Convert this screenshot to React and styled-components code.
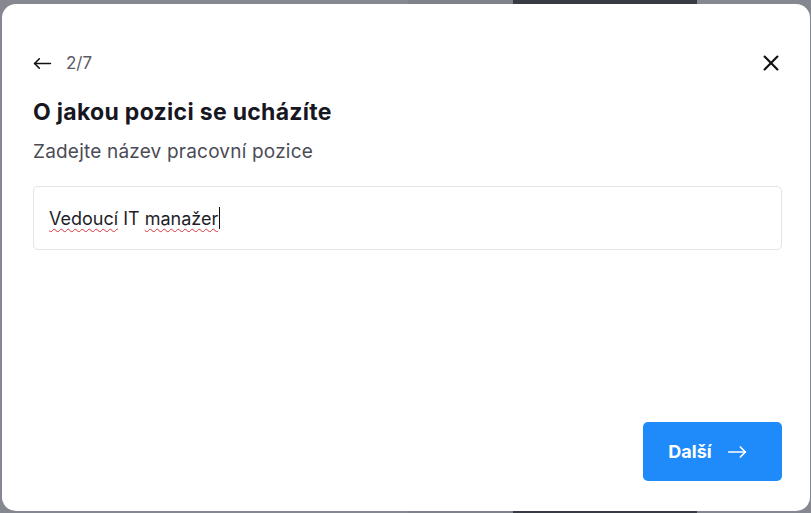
import React from "react"
import styled, { createGlobalStyle } from "styled-components"

const Global = createGlobalStyle`
  html, body {
    margin: 0;
    padding: 0;
  }
  body {
    font-family: "Inter", "Noto Sans", sans-serif;
  }
`

const Backdrop = styled.div`
  width: 811px;
  height: 513px;
  box-sizing: border-box;
  padding: 4px 1px 2px 2px;
  display: flex;
  background: linear-gradient(
    to right,
    #868891 0px,
    #868891 408px,
    #7f828b 408px,
    #7f828b 513px,
    #383b43 513px,
    #383b43 697px,
    #868891 697px
  );
`

const Modal = styled.div`
  flex: 1;
  background: #fff;
  border-radius: 14px;
  padding: 48px 28px 30px 31px;
  display: flex;
  flex-direction: column;
`

const TopRow = styled.div`
  display: flex;
  align-items: center;
  justify-content: space-between;
  height: 22px;
`

const Step = styled.div`
  display: flex;
  align-items: center;
  gap: 14px;
  color: #5b5b66;
  font-size: 17px;
`

const IconButton = styled.button`
  border: none;
  background: none;
  padding: 0;
  display: flex;
  cursor: pointer;
  color: #111;
`

const Title = styled.h2`
  margin: 25px 0 0;
  font-size: 23px;
  line-height: 26px;
  letter-spacing: 0.3px;
  font-weight: 700;
  color: #171722;
`

const Hint = styled.p`
  margin: 16px 0 0;
  font-size: 19px;
  line-height: 22px;
  letter-spacing: 0.2px;
  color: #4b4b55;
`

const Field = styled.div`
  margin-top: 23px;
  height: 64px;
  box-sizing: border-box;
  border: 1px solid #e4e4e7;
  border-radius: 5px;
  padding: 0 15px;
  display: flex;
  align-items: center;
  font-size: 18px;
  color: #1e1e28;
`

const Typo = styled.span`
  text-decoration: underline wavy #d9363e;
  text-decoration-thickness: 1px;
  text-underline-offset: 3px;
`

const Caret = styled.span`
  display: inline-block;
  width: 1px;
  height: 22px;
  background: #111;
  margin-left: 1px;
`

const Footer = styled.div`
  margin-top: auto;
  display: flex;
  justify-content: flex-end;
`

const NextButton = styled.button`
  width: 139px;
  height: 59px;
  border: none;
  border-radius: 5px;
  padding: 0 10px 0 0;
  background: #1f8bfa;
  color: #fff;
  font-family: inherit;
  font-size: 18px;
  font-weight: 700;
  display: flex;
  align-items: center;
  justify-content: center;
  gap: 15px;
  cursor: pointer;
`

const Arrow = ({ dir = "left", size = 20 }) => (
  <svg width={size} height={size} viewBox="0 0 24 24" fill="none" stroke="currentColor" strokeWidth="2" strokeLinecap="round" strokeLinejoin="round">
    {dir === "left" ? (
      <>
        <path d="M22 12H2" />
        <path d="M8 6l-6 6 6 6" />
      </>
    ) : (
      <>
        <path d="M2 12h20" />
        <path d="M16 6l6 6-6 6" />
      </>
    )}
  </svg>
)

const App = () => {
  return (
    <Backdrop>
      <Global />
      <Modal>
        <TopRow>
          <Step>
            <IconButton>
              <Arrow dir="left" size={19} />
            </IconButton>
            <span>2/7</span>
          </Step>
          <IconButton>
            <svg width="22" height="22" viewBox="0 0 24 24" fill="none" stroke="currentColor" strokeWidth="2.4" strokeLinecap="round">
              <path d="M5 5l14 14M19 5L5 19" />
            </svg>
          </IconButton>
        </TopRow>

        <Title>O jakou pozici se ucházíte</Title>
        <Hint>Zadejte název pracovní pozice</Hint>

        <Field>
          <Typo>Vedoucí</Typo>&nbsp;IT&nbsp;<Typo>manažer</Typo>
          <Caret />
        </Field>

        <Footer>
          <NextButton>
            Další
            <Arrow dir="right" size={20} />
          </NextButton>
        </Footer>
      </Modal>
    </Backdrop>
  )
}

export default App
